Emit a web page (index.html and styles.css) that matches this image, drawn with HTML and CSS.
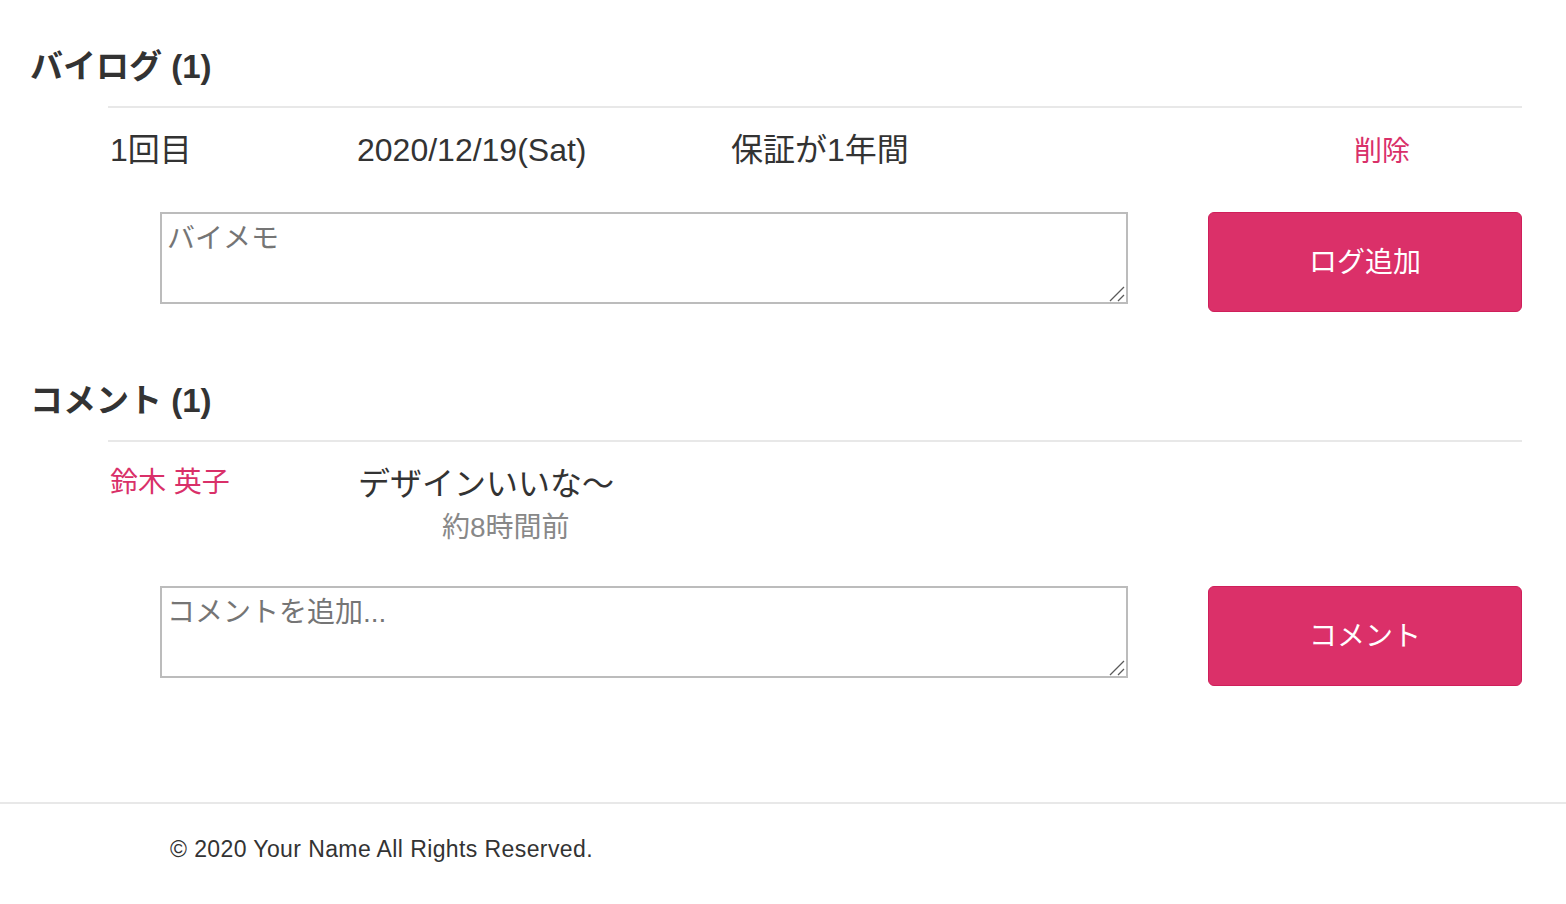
FILE: index.html
```html
<!DOCTYPE html>
<html lang="ja">
<head>
<meta charset="utf-8">
<title>バイログ</title>
<link rel="stylesheet" href="styles.css">
</head>
<body>
<main class="main">
  <section class="section section-log">
    <h2 class="section-title">バイログ (1)</h2>
    <div class="rule"></div>
    <div class="row log-row">
      <div class="cell">1回目</div>
      <div class="cell">2020/12/19(Sat)</div>
      <div class="cell">保証が1年間</div>
      <div class="cell"><a class="link-delete" href="#">削除</a></div>
    </div>
    <form class="form-row">
      <div class="input-wrap">
        <textarea class="input" placeholder="バイメモ"></textarea>
        <svg class="grip" width="16" height="16" viewBox="0 0 16 16"><path d="M1 15 L15 1 M9 15 L15 9" stroke="#5a5a5a" stroke-width="1.3" fill="none"/></svg>
      </div>
      <button type="button" class="btn">ログ追加</button>
    </form>
  </section>

  <section class="section section-comment">
    <h2 class="section-title">コメント (1)</h2>
    <div class="rule"></div>
    <div class="row comment-row">
      <div class="cell"><a class="user" href="#">鈴木 英子</a></div>
      <div class="cell comment-body">
        <div class="comment-text">デザインいいな〜</div>
        <div class="comment-time">約8時間前</div>
      </div>
    </div>
    <form class="form-row form-comment">
      <div class="input-wrap">
        <textarea class="input" placeholder="コメントを追加..."></textarea>
        <svg class="grip" width="16" height="16" viewBox="0 0 16 16"><path d="M1 15 L15 1 M9 15 L15 9" stroke="#5a5a5a" stroke-width="1.3" fill="none"/></svg>
      </div>
      <button type="button" class="btn">コメント</button>
    </form>
  </section>
</main>
<footer class="footer">
  <p class="copyright">© 2020 Your Name All Rights Reserved.</p>
</footer>
</body>
</html>
```
FILE: styles.css
```css
* { box-sizing: border-box; }

html, body {
  margin: 0;
  padding: 0;
  background: #fff;
}

body {
  font-family: "Liberation Sans", "Noto Sans CJK JP", sans-serif;
  color: #333;
  width: 1566px;
  height: 904px;
  overflow: hidden;
}

.main {
  padding: 47px 44px 0 30px;
}

.section-comment {
  margin-top: 69px;
}

.section-title {
  margin: 0;
  font-size: 33px;
  line-height: 40px;
  font-weight: 700;
  color: #333;
}

.rule {
  margin: 19px 0 0 78px;
  height: 2px;
  background: #e8e8e8;
}

.row {
  display: grid;
  grid-template-columns: 247px 374px 623px 1fr;
  margin: 22px 0 0 80px;
  font-size: 32px;
  line-height: 40px;
  color: #333;
}

.link-delete {
  color: #d93069;
  text-decoration: none;
  font-size: 28px;
}

.user {
  display: block;
  color: #d93069;
  text-decoration: none;
  font-size: 28px;
  line-height: 37px;
}

.comment-row .comment-body {
  grid-column: 2 / 5;
}

.comment-text {
  font-size: 32px;
  line-height: 40px;
  padding-left: 1px;
}

.comment-time {
  margin-top: 4px;
  padding-left: 85px;
  font-size: 28px;
  line-height: 40px;
  color: #888;
}

.form-row {
  display: flex;
  align-items: flex-start;
  gap: 80px;
  margin: 40px 0 0 130px;
}

.form-comment {
  margin-top: 38px;
}

.input-wrap {
  position: relative;
  width: 968px;
  height: 92px;
}

.input {
  display: block;
  width: 100%;
  height: 100%;
  border: 2px solid #bcbcbc;
  border-radius: 0;
  padding: 8px 5px 4px;
  font-family: "Liberation Sans", "Noto Sans CJK JP", sans-serif;
  font-size: 28px;
  line-height: 34px;
  color: #333;
  resize: none;
  background: #fff;
}

.input::placeholder {
  color: #757575;
}

.grip {
  position: absolute;
  right: 3px;
  bottom: 2px;
  pointer-events: none;
}

.btn {
  width: 314px;
  height: 100px;
  padding: 0 0 5px;
  background: #db3069;
  border: 1px solid #cf1f5a;
  border-radius: 6px;
  color: #fff;
  font-family: "Liberation Sans", "Noto Sans CJK JP", sans-serif;
  font-size: 28px;
  cursor: pointer;
}

.footer {
  margin-top: 116px;
  border-top: 2px solid #e8e8e8;
  padding: 29px 0 0 170px;
}

.copyright {
  margin: 0;
  font-size: 23px;
  line-height: 32px;
  letter-spacing: 0.4px;
  color: #333;
}
```
